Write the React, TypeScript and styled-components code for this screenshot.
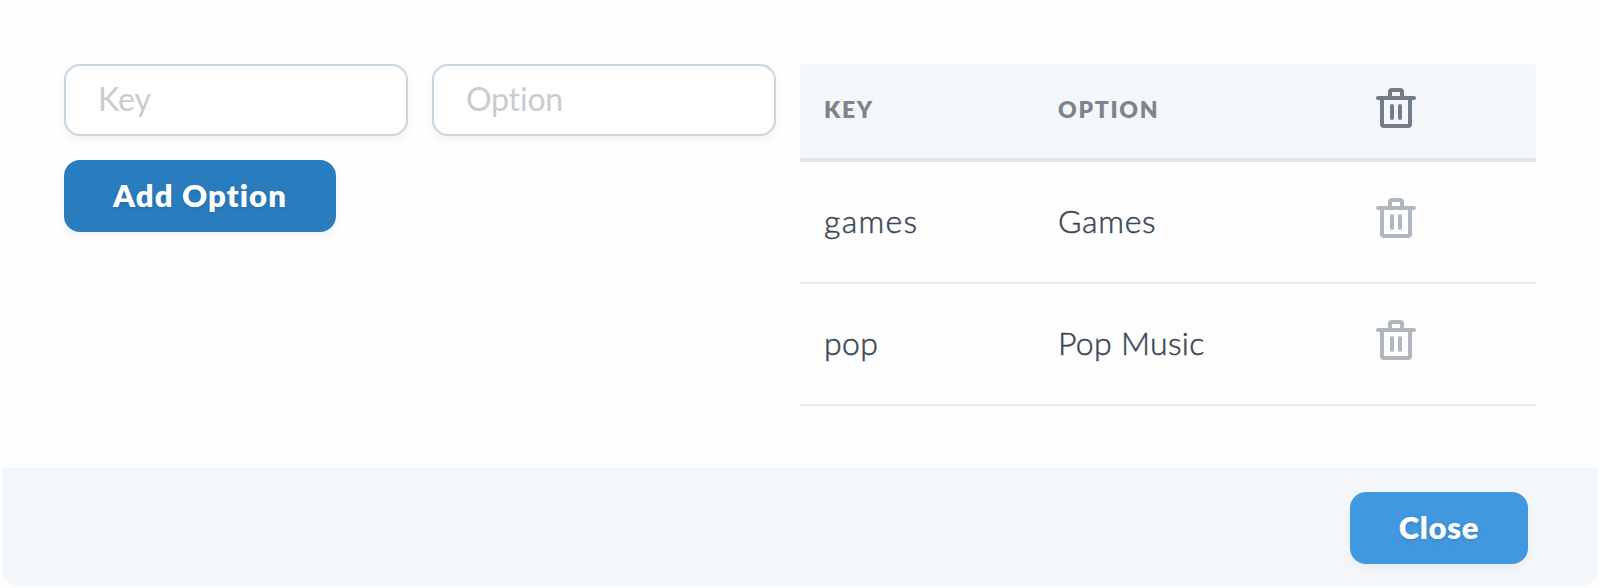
import React from 'react';
import styled, { createGlobalStyle } from 'styled-components';

const GlobalStyle = createGlobalStyle`
  *, *::before, *::after { box-sizing: border-box; }
  body {
    margin: 0;
    background: #fefefe;
    font-family: Lato, "Open Sans", sans-serif;
    font-size: 32px;
    font-variant-ligatures: none;
    color: #3c4655;
  }
`;

const Modal = styled.div`
  display: flex;
  flex-direction: column;
  height: 588px;
  padding: 0 2px 2px;
`;

const Content = styled.main`
  display: flex;
  gap: 24px;
  height: 468px;
  padding: 64px 62px 0;
`;

const Form = styled.form`
  display: flex;
  flex-wrap: wrap;
  align-content: flex-start;
  gap: 24px;
  width: 712px;
`;

const TextInput = styled.input<{ $tracking: number }>`
  width: 344px;
  height: 72px;
  padding: 0 32px 3px;
  border: 2px solid #c6d5e1;
  border-radius: 16px;
  outline: none;
  background: #fff;
  box-shadow: 0 4px 8px rgba(0, 0, 0, 0.05);
  font: inherit;
  font-variant-ligatures: none;
  color: #7c858e;
  letter-spacing: ${(p) => p.$tracking}px;
  &::placeholder { color: #c8ccd1; opacity: 1; }
`;

const Button = styled.button<{ $color: string; $width: number; $tracking: number }>`
  width: ${(p) => p.$width}px;
  height: 72px;
  padding: 0 0 3px;
  border: 0;
  border-radius: 16px;
  background: ${(p) => p.$color};
  box-shadow: 0 4px 8px rgba(0, 0, 0, 0.05);
  color: #fff;
  font: inherit;
  font-size: 31px;
  font-weight: 800;
  letter-spacing: ${(p) => p.$tracking}px;
  text-shadow: 0 2px 4px rgba(0, 0, 0, 0.1);
`;

const Table = styled.div`
  width: 736px;
`;

const Row = styled.div`
  display: grid;
  grid-template-columns: 234px 318px 1fr;
  align-items: center;
  height: 122px;
  padding-left: 24px;
  border-bottom: 2px solid #e7ebf0;
  font-weight: 300;
  -webkit-text-stroke: 0.5px currentColor;
`;

const HeaderRow = styled(Row)`
  height: 98px;
  border-bottom: 4px solid #e0e6eb;
  background: #f3f7fa;
  color: #7c858e;
  font-size: 23px;
  font-weight: 800;
  -webkit-text-stroke: 0;
`;

const Cell = styled.span<{ $tracking: number }>`
  padding-bottom: 4px;
  letter-spacing: ${(p) => p.$tracking}px;
  white-space: nowrap;
`;

const DeleteButton = styled.button<{ $muted?: boolean }>`
  display: flex;
  width: 40px;
  height: 40px;
  margin-bottom: ${(p) => (p.$muted ? 8 : 6)}px;
  padding: 0;
  border: 0;
  background: none;
  color: ${(p) => (p.$muted ? '#b0b7be' : '#727d89')};
`;

const Footer = styled.footer`
  display: flex;
  justify-content: flex-end;
  align-items: flex-start;
  height: 118px;
  padding: 24px 70px 0;
  border-radius: 0 0 16px 16px;
  background: #f3f7fa;
`;

const TrashIcon = () => (
  <svg width="40" height="40" viewBox="0 0 20 20" fill="currentColor" aria-hidden="true">
    <path
      fillRule="nonzero"
      d="M6 4V2a2 2 0 0 1 2-2h4a2 2 0 0 1 2 2v2h5a1 1 0 0 1 0 2h-1v12a2 2 0 0 1-2 2H4a2 2 0 0 1-2-2V6H1a1 1 0 1 1 0-2h5zM4 6v12h12V6H4zm8-2V2H8v2h4zM8 8a1 1 0 0 1 1 1v6a1 1 0 0 1-2 0V9a1 1 0 0 1 1-1zm4 0a1 1 0 0 1 1 1v6a1 1 0 0 1-2 0V9a1 1 0 0 1 1-1z"
    />
  </svg>
);

const options = [
  { key: 'games', label: 'Games', keyTracking: 1.3, labelTracking: 0.7 },
  { key: 'pop', label: 'Pop Music', keyTracking: 0.4, labelTracking: 0.3 },
];

export default function App() {
  return (
    <>
      <GlobalStyle />
      <Modal>
        <Content>
          <Form onSubmit={(e) => e.preventDefault()}>
            <TextInput placeholder="Key" $tracking={0} />
            <TextInput placeholder="Option" $tracking={-0.2} />
            <Button $color="#297dbf" $width={272} $tracking={1.1}>Add Option</Button>
          </Form>
          <Table>
            <HeaderRow>
              <Cell $tracking={1.7}>KEY</Cell>
              <Cell $tracking={1.7}>OPTION</Cell>
              <DeleteButton aria-label="Delete all"><TrashIcon /></DeleteButton>
            </HeaderRow>
            {options.map((o) => (
              <Row key={o.key}>
                <Cell $tracking={o.keyTracking}>{o.key}</Cell>
                <Cell $tracking={o.labelTracking}>{o.label}</Cell>
                <DeleteButton $muted aria-label={`Delete ${o.label}`}><TrashIcon /></DeleteButton>
              </Row>
            ))}
          </Table>
        </Content>
        <Footer>
          <Button $color="#4298df" $width={178} $tracking={0.7}>Close</Button>
        </Footer>
      </Modal>
    </>
  );
}
